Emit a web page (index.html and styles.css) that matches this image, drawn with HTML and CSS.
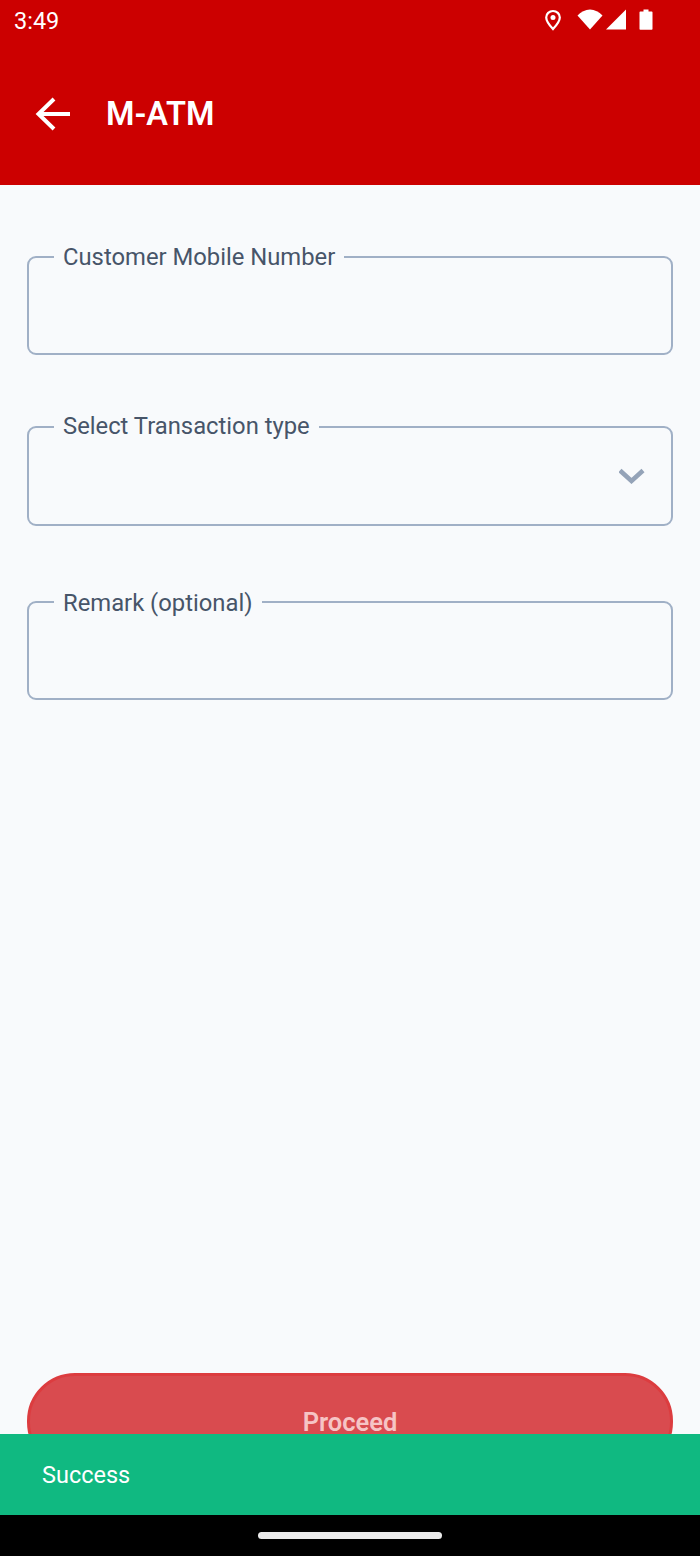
FILE: index.html
```html
<!DOCTYPE html>
<html lang="en">
<head>
    <meta charset="UTF-8">
    <meta name="viewport" content="width=device-width, initial-scale=1.0">
    <title>M-ATM</title>
    <link rel="stylesheet" href="styles.css">
</head>
<body>
    <header class="app-header">
        <div class="status-bar">
            <span class="status-time">3:49</span>
            <div class="status-icons">
                <svg class="icon-location" width="18" height="22" viewBox="0 0 18 22">
                    <path d="M9 2C5.200 2 2.200 4.900 2.200 8.400 2.200 12.600 9 20 9 20s6.800-7.400 6.800-11.600C15.800 4.900 12.800 2 9 2z" fill="none" stroke="#fff" stroke-width="2.200"/>
                    <circle cx="9" cy="8.500" r="2.500" fill="#fff"/>
                </svg>
                <svg class="icon-wifi" width="26" height="22" viewBox="0 0 26 22">
                    <path d="M0.500 6.500C4 3 8.300 0.500 13 0.500s9 2.500 12.500 6L13 20.500z" fill="#fff"/>
                </svg>
                <svg class="icon-signal" width="22" height="22" viewBox="0 0 22 22">
                    <path d="M21 0.500V20.500H1z" fill="#fff"/>
                </svg>
                <svg class="icon-battery" width="14" height="22" viewBox="0 0 14 22">
                    <path d="M4.500 0.500h5v2h3.200c0.500 0 0.800 0.300 0.800 0.800V20c0 0.500-0.300 0.800-0.800 0.800H1.300c-0.500 0-0.800-0.300-0.800-0.800V3.300c0-0.500 0.300-0.800 0.800-0.800h3.200z" fill="#fff"/>
                </svg>
            </div>
        </div>
        <div class="toolbar">
            <svg class="back-icon" width="36" height="36" viewBox="0 0 36 36">
                <path d="M35 18H4M19 3L3.500 18 19 33" fill="none" stroke="#fff" stroke-width="4"/>
            </svg>
            <h1>M-ATM</h1>
        </div>
    </header>

    <main class="content">
        <form class="form">
            <fieldset class="field field-mobile">
                <legend>Customer Mobile Number</legend>
            </fieldset>
            <fieldset class="field field-type">
                <legend>Select Transaction type</legend>
                <svg class="chevron" width="26" height="16" viewBox="0 0 26 16">
                    <path d="M1 2.500L12.500 13 24 2.500" fill="none" stroke="#94a3b8" stroke-width="4.500"/>
                </svg>
            </fieldset>
            <fieldset class="field field-remark">
                <legend>Remark (optional)</legend>
            </fieldset>
        </form>
        <button class="proceed" type="button">Proceed</button>
    </main>

    <div class="snackbar">Success</div>
    <div class="nav-bar"><span class="home-pill"></span></div>
</body>
</html>
```

FILE: styles.css
```css
* {
    box-sizing: border-box;
}
html, body {
    height: 1556px;
}
body {
    margin: 0;
    position: relative;
    overflow: hidden;
    display: flex;
    flex-direction: column;
    font-family: Roboto, sans-serif;
    background-color: #f8fafc;
}
.app-header {
    height: 185px;
    flex: none;
    background-color: #cc0000;
    color: #fff;
}
.status-bar {
    height: 42px;
    padding: 0 47px 0 14px;
    display: flex;
    align-items: center;
    justify-content: space-between;
}
.status-time {
    font-size: 23.5px;
}
.status-icons {
    display: flex;
    align-items: center;
    margin-bottom: 2px;
}
.icon-location {
    margin-right: 15px;
}
.icon-wifi {
    margin-right: 2px;
}
.icon-signal {
    margin-right: 12px;
}
.toolbar {
    height: 143px;
    padding-left: 35px;
    display: flex;
    align-items: center;
    gap: 35px;
}
.toolbar h1 {
    margin: 0;
    font-size: 32.5px;
    font-weight: 600;
}
.content {
    flex: 1;
    padding: 0 27px;
    display: flex;
    flex-direction: column;
}
.form {
    flex: 1;
}
.field {
    margin: 0;
    padding: 0 0 0 25px;
    min-width: 0;
    border: 2px solid #a0b0c6;
    border-radius: 9px;
    position: relative;
}
.field legend {
    padding: 0 9px;
    font-size: 23.8px;
    line-height: 28px;
    color: #475569;
}
.field-mobile {
    margin-top: 58px;
    height: 112px;
}
.field-type {
    margin-top: 57px;
    height: 114px;
}
.field-type legend {
    padding-bottom: 2px;
}
.field-remark {
    margin-top: 61px;
    height: 113px;
}
.field-remark legend {
    padding-top: 2px;
}
.chevron {
    position: absolute;
    right: 26px;
    top: 26px;
}
.proceed {
    height: 97px;
    margin-bottom: 86px;
    flex: none;
    border: 3px solid #dc3c3f;
    border-radius: 48px;
    background-color: #d94b4f;
    color: #f6c4c5;
    font-family: Roboto, sans-serif;
    font-size: 25.5px;
    font-weight: 600;
}
.snackbar {
    position: absolute;
    left: 0;
    right: 0;
    bottom: 41px;
    height: 81px;
    padding-left: 42px;
    display: flex;
    align-items: center;
    background-color: #10b981;
    color: #fff;
    font-size: 23.5px;
}
.nav-bar {
    position: absolute;
    left: 0;
    right: 0;
    bottom: 0;
    height: 41px;
    display: flex;
    justify-content: center;
    padding-top: 17px;
    background-color: #000;
}
.home-pill {
    width: 184px;
    height: 7px;
    border-radius: 4px;
    background-color: #ebebeb;
}
```
